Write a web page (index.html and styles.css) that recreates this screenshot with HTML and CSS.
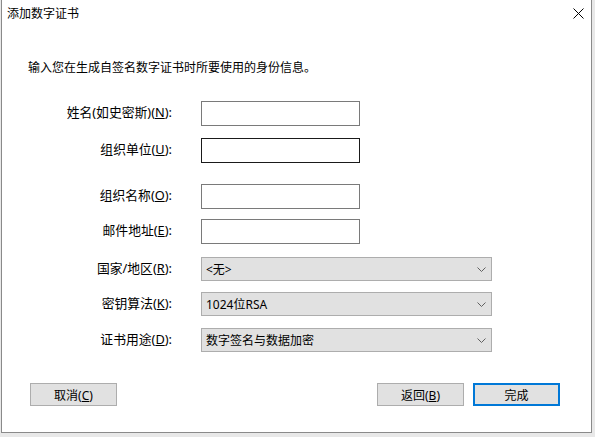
FILE: index.html
```html
<!DOCTYPE html>
<html lang="zh-CN">
<head>
    <meta charset="UTF-8">
    <title>添加数字证书</title>
    <link rel="stylesheet" href="styles.css">
</head>
<body>
    <div class="dialog">
        <div class="titlebar">
            <span class="title">添加数字证书</span>
            <span class="close">
                <svg width="11" height="11" viewBox="0 0 11 11">
                    <path d="M0.5 0.5 L10.5 10.5 M10.5 0.5 L0.5 10.5" stroke="#000" stroke-width="1" fill="none"/>
                </svg>
            </span>
        </div>

        <p class="intro">输入您在生成自签名数字证书时所要使用的身份信息。</p>

        <div class="form">
            <div class="row">
                <label class="label">姓名(如史密斯)(<u>N</u>):</label>
                <div class="field"></div>
            </div>
            <div class="row row-2">
                <label class="label">组织单位(<u>U</u>):</label>
                <div class="field focused"></div>
            </div>
            <div class="row row-3">
                <label class="label">组织名称(<u>O</u>):</label>
                <div class="field"></div>
            </div>
            <div class="row row-4">
                <label class="label">邮件地址(<u>E</u>):</label>
                <div class="field"></div>
            </div>
            <div class="row row-5">
                <label class="label">国家/地区(<u>R</u>):</label>
                <div class="combo"><span>&lt;无&gt;</span><svg class="chevron" width="9" height="5" viewBox="0 0 9 5"><path d="M0.5 0.5 L4.5 4.5 L8.5 0.5" stroke="#606060" fill="none"/></svg></div>
            </div>
            <div class="row row-6">
                <label class="label">密钥算法(<u>K</u>):</label>
                <div class="combo"><span>1024位RSA</span><svg class="chevron" width="9" height="5" viewBox="0 0 9 5"><path d="M0.5 0.5 L4.5 4.5 L8.5 0.5" stroke="#606060" fill="none"/></svg></div>
            </div>
            <div class="row row-7">
                <label class="label">证书用途(<u>D</u>):</label>
                <div class="combo"><span>数字签名与数据加密</span><svg class="chevron" width="9" height="5" viewBox="0 0 9 5"><path d="M0.5 0.5 L4.5 4.5 L8.5 0.5" stroke="#606060" fill="none"/></svg></div>
            </div>
        </div>

        <div class="buttons">
            <button class="btn">取消(<u>C</u>)</button>
            <div class="right">
                <button class="btn">返回(<u>B</u>)</button>
                <button class="btn primary">完成</button>
            </div>
        </div>
    </div>
</body>
</html>
```

FILE: styles.css
```css
body {
    margin: 0;
    background: #e8e8e8;
    font-family: "Noto Sans", "Noto Sans CJK SC", sans-serif;
    font-size: 12px;
    color: #000;
}

.dialog {
    width: 589px;
    height: 432px;
    margin-left: 1px;
    background: #fff;
    border-left: 1px solid #8a8a8a;
    border-right: 1px solid #8a8a8a;
    border-bottom: 1px solid #8a8a8a;
}

.titlebar {
    height: 27px;
    display: flex;
    align-items: center;
    justify-content: space-between;
    padding-left: 5px;
}

.title {
    font-size: 12px;
    line-height: 16px;
}

.close {
    width: 26px;
    display: flex;
    justify-content: center;
}

.intro {
    margin: 33px 0 0 0;
    padding-left: 26px;
    line-height: 16px;
}

.form {
    margin-top: 25px;
}

.row {
    display: flex;
    align-items: center;
    gap: 29px;
}

.row-2 { margin-top: 12px; }
.row-3 { margin-top: 21px; }
.row-4 { margin-top: 10px; }
.row-5 { margin-top: 13px; }
.row-6 { margin-top: 11px; }
.row-7 { margin-top: 12px; }

.label {
    width: 170px;
    text-align: right;
    font-size: 12.8px;
    line-height: 16px;
    padding-bottom: 3px;
}

.field {
    width: 159px;
    height: 25px;
    box-sizing: border-box;
    border: 1px solid #7a7a7a;
    background: #fff;
}

.field.focused {
    border-color: #1a1a1a;
}

.combo {
    width: 291px;
    height: 24px;
    box-sizing: border-box;
    border: 1px solid #adadad;
    background: #e1e1e1;
    display: flex;
    align-items: center;
    justify-content: space-between;
    padding: 0 5px 0 4px;
}

.chevron {
    margin-top: 1px;
}

.buttons {
    margin-top: 31px;
    display: flex;
    justify-content: space-between;
    padding: 0 31px 0 28px;
}

.right {
    display: flex;
    gap: 9px;
}

.btn {
    width: 87px;
    height: 23px;
    box-sizing: border-box;
    border: 1px solid #adadad;
    background: #e1e1e1;
    font-family: inherit;
    font-size: 12px;
    color: #000;
    padding: 0;
}

.btn.primary {
    border: 2px solid #0078d7;
}
```
